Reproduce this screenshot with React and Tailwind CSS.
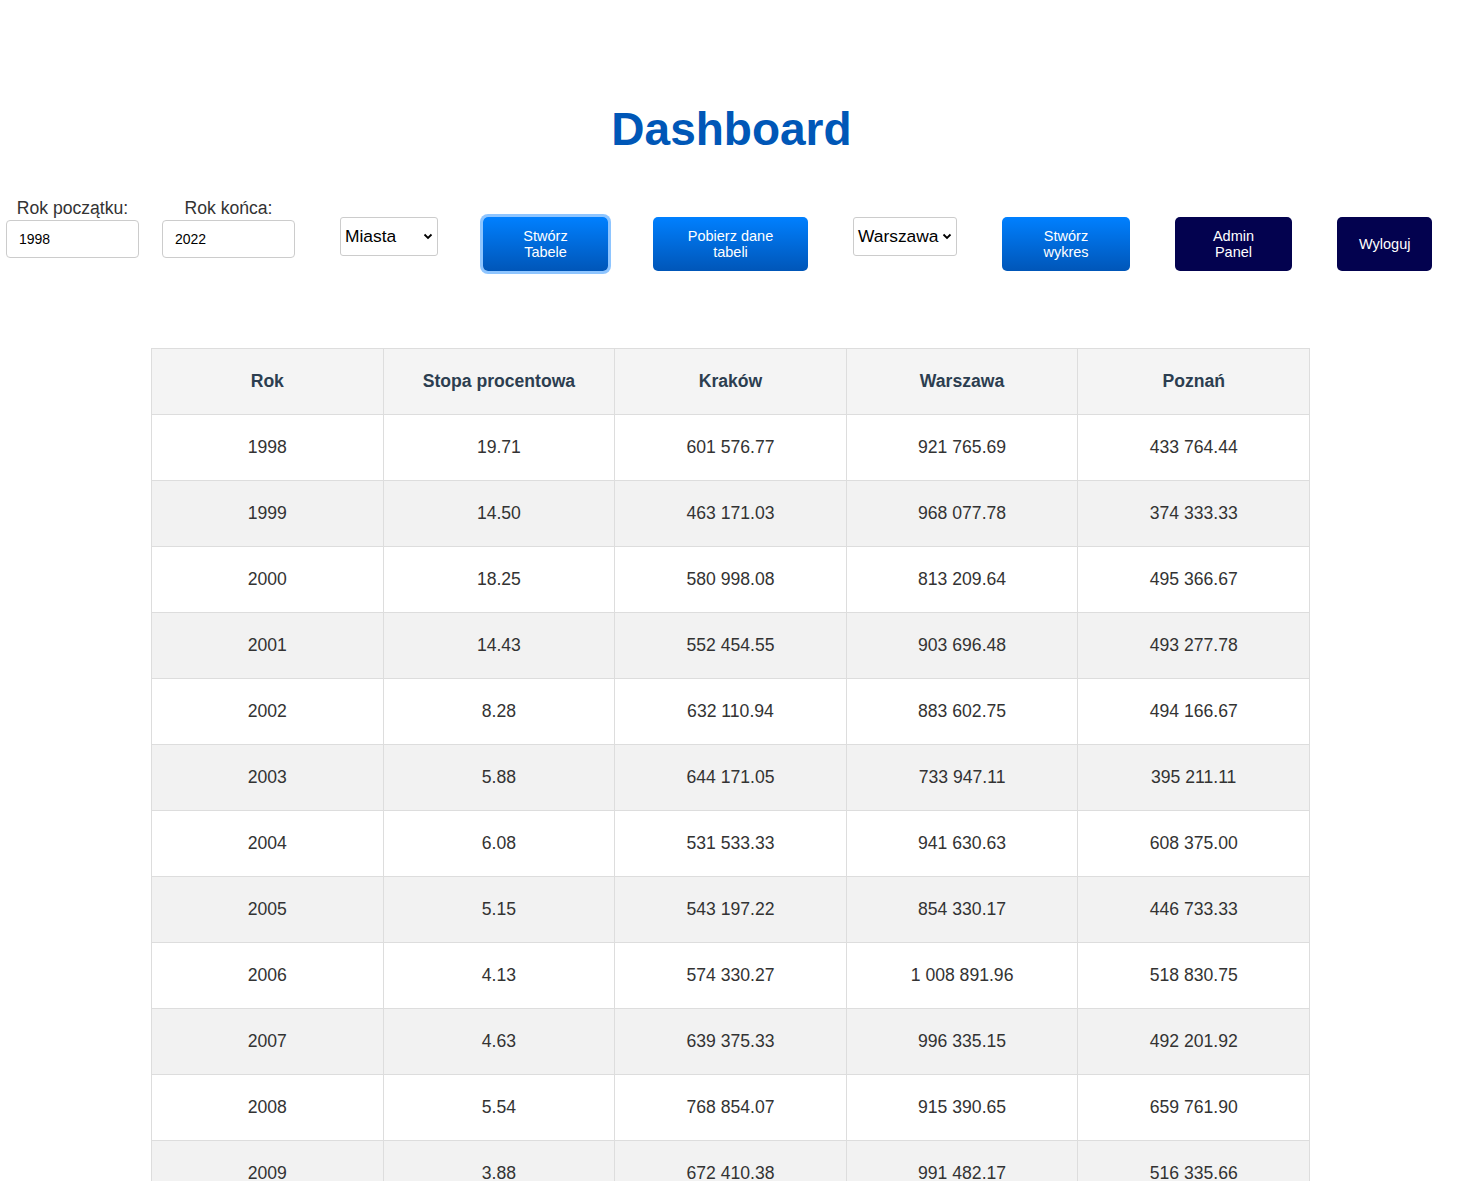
import React from 'react';

const rows = [
    ['1998', '19.71', '601 576.77', '921 765.69', '433 764.44'],
    ['1999', '14.50', '463 171.03', '968 077.78', '374 333.33'],
    ['2000', '18.25', '580 998.08', '813 209.64', '495 366.67'],
    ['2001', '14.43', '552 454.55', '903 696.48', '493 277.78'],
    ['2002', '8.28', '632 110.94', '883 602.75', '494 166.67'],
    ['2003', '5.88', '644 171.05', '733 947.11', '395 211.11'],
    ['2004', '6.08', '531 533.33', '941 630.63', '608 375.00'],
    ['2005', '5.15', '543 197.22', '854 330.17', '446 733.33'],
    ['2006', '4.13', '574 330.27', '1 008 891.96', '518 830.75'],
    ['2007', '4.63', '639 375.33', '996 335.15', '492 201.92'],
    ['2008', '5.54', '768 854.07', '915 390.65', '659 761.90'],
    ['2009', '3.88', '672 410.38', '991 482.17', '516 335.66'],
];

const headers = ['Rok', 'Stopa procentowa', 'Kraków', 'Warszawa', 'Poznań'];

const blueBtn =
    'mt-[20px] h-[54px] rounded-[5px] bg-gradient-to-b from-[#0080ff] to-[#0056b8] text-white text-[14.5px] leading-[16px] px-[22px]';
const darkBtn =
    'mt-[20px] h-[54px] rounded-[5px] bg-[#03024f] text-white text-[14.5px] leading-[16px] px-[22px]';

function Field({ label, value }) {
    return (
        <div className="flex flex-col items-center">
            <label className="text-[17.6px] leading-[20px] mt-[1px] text-[#333]">{label}</label>
            <input
                defaultValue={value}
                className="mt-[2px] w-[133px] h-[38px] border border-[#ccc] rounded-[4px] px-[12px] text-[14px] text-black bg-white outline-none"
            />
        </div>
    );
}

function Select({ value, width }) {
    return (
        <div
            className={`mt-[20px] h-[39px] ${width} border border-[#ccc] rounded-[3px] bg-white flex items-center justify-between pl-[4px] pr-[4px] text-[17.4px] text-black`}
        >
            <span>{value}</span>
            <svg width="10" height="7" viewBox="0 0 10 7">
                <path d="M1.5 1.5 L5 5 L8.5 1.5" fill="none" stroke="#000" strokeWidth="1.8" />
            </svg>
        </div>
    );
}

export default function App() {
    return (
        <div className="min-h-screen bg-white pt-[103px] font-['Liberation_Sans',Arial,sans-serif]">
            <h1 className="text-center text-[46px] leading-[52px] font-bold text-[#0057b7]">Dashboard</h1>

            <div className="mt-[42px] flex items-start pl-[6px]">
                <Field label="Rok początku:" value="1998" />
                <div className="ml-[23px]">
                    <Field label="Rok końca:" value="2022" />
                </div>
                <div className="ml-[45px]">
                    <Select value="Miasta" width="w-[98px]" />
                </div>
                <button className={`${blueBtn} ml-[45px] w-[125px] ring-[3px] ring-[#8ec5ff]`}>Stwórz Tabele</button>
                <button className={`${blueBtn} ml-[45px] w-[155px]`}>Pobierz dane tabeli</button>
                <div className="ml-[45px]">
                    <Select value="Warszawa" width="w-[104px]" />
                </div>
                <button className={`${blueBtn} ml-[45px] w-[128px]`}>Stwórz wykres</button>
                <button className={`${darkBtn} ml-[45px] w-[117px]`}>Admin Panel</button>
                <button className={`${darkBtn} ml-[45px] w-[95px]`}>Wyloguj</button>
            </div>

            <table className="mt-[77px] ml-[151px] w-[1159px] table-fixed border-collapse text-[17.6px]">
                <thead>
                    <tr className="h-[66px] bg-[#f4f4f4]">
                        {headers.map((h) => (
                            <th key={h} className="border border-[#ddd] font-bold text-[#2c3e50] text-center">
                                {h}
                            </th>
                        ))}
                    </tr>
                </thead>
                <tbody>
                    {rows.map((r, i) => (
                        <tr key={r[0]} className={`h-[66px] ${i % 2 === 1 ? 'bg-[#f2f2f2]' : 'bg-white'}`}>
                            {r.map((c, j) => (
                                <td key={j} className="border border-[#ddd] text-center text-[#333]">
                                    {c}
                                </td>
                            ))}
                        </tr>
                    ))}
                </tbody>
            </table>
        </div>
    );
}
